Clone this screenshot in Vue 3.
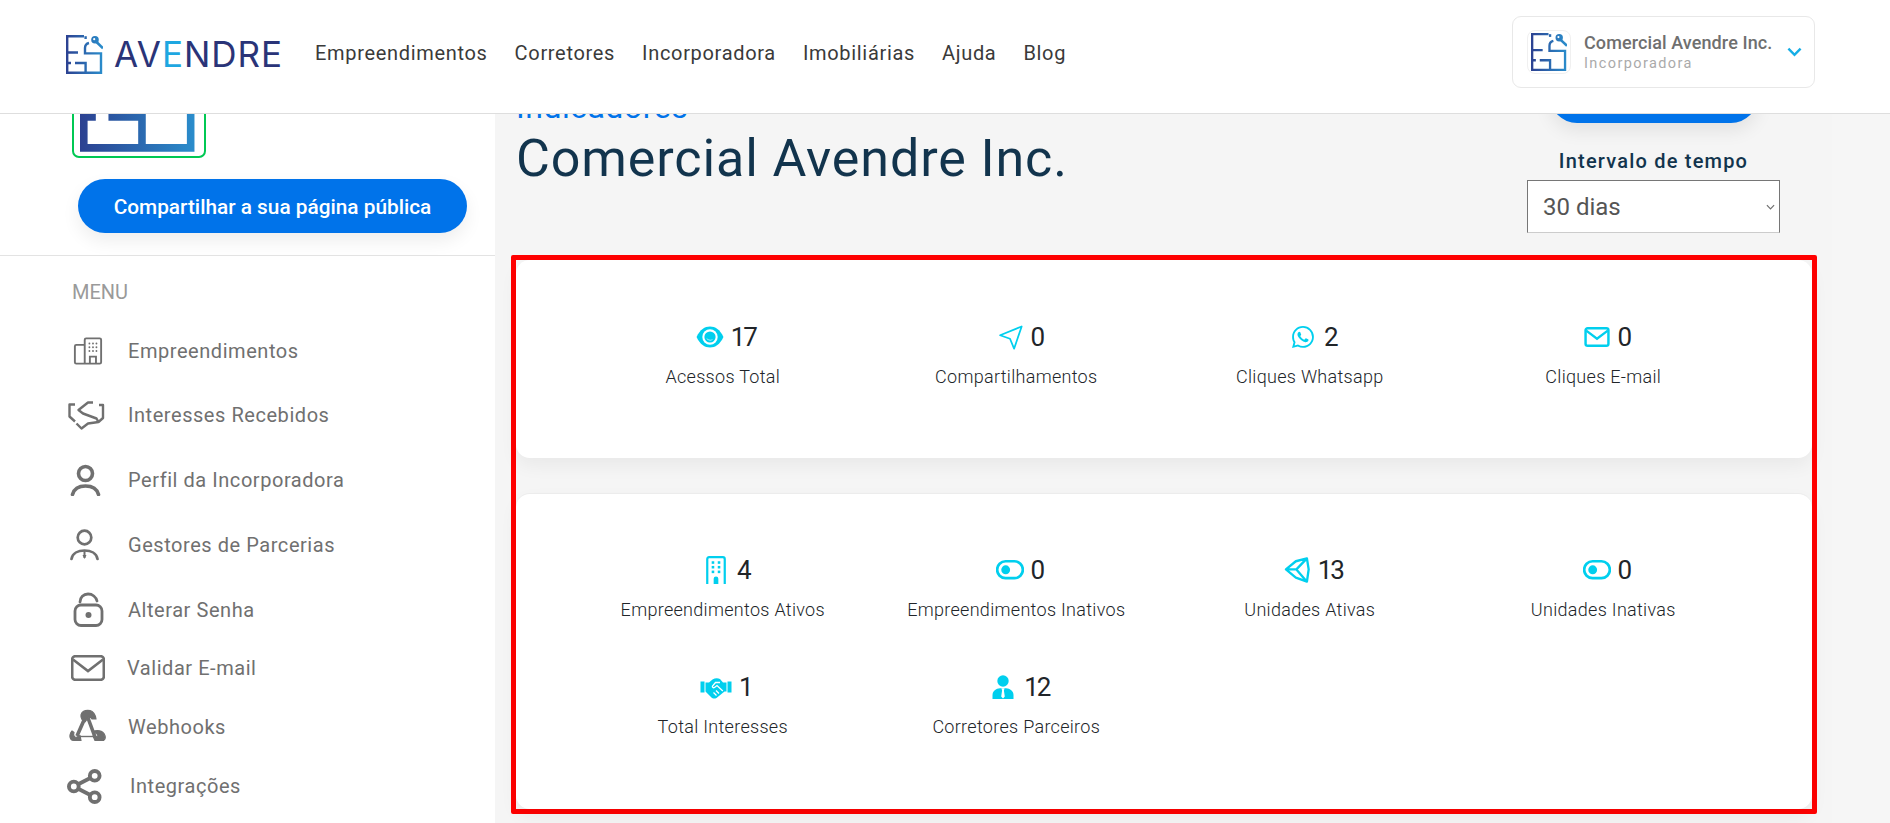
<template>
  <div class="page">
    <!-- icon sprite -->
    <svg class="sprite" aria-hidden="true">
      <defs>
        <linearGradient id="mark-grad" gradientUnits="userSpaceOnUse" x1="0" y1="20" x2="36" y2="20">
          <stop offset="0" stop-color="#2c4191" />
          <stop offset="1" stop-color="#2a8ccb" />
        </linearGradient>
      </defs>
      <symbol id="mark" viewBox="0 0 37 39">
        <g fill="none" stroke="url(#mark-grad)" stroke-width="2.4">
          <path d="M18 1.200H1.200V37.800H35V18.400H19V13C19 10.500 21 8.500 23 8" />
          <path d="M1.200 17.500H12M1.200 28H5M9 28H19.600V37.800" />
          <path d="M19.600 1.200V4" />
          <path d="M30.500 7 37 13.200" stroke-width="2.600" />
        </g>
        <circle cx="29" cy="4.800" r="3.800" fill="url(#mark-grad)" />
        <circle cx="28.200" cy="4.200" r="1.100" fill="#fff" />
      </symbol>

      <!-- stat icons -->
      <symbol id="s-eye" viewBox="0 0 24 24">
        <path fill="currentColor" d="M.5 12C3.500 5.500 7.500 3 12 3S20.500 5.500 23.500 12C20.500 18.500 16.500 21 12 21S3.500 18.500.5 12Z" />
        <circle cx="12" cy="12" r="6.600" fill="#fff" />
        <circle cx="12" cy="12" r="4.800" fill="currentColor" />
        <path d="M8.800 12.600A3.400 3.400 0 0 0 14.800 13.800A5 5 0 0 1 8.800 12.600Z" fill="#9fecf8" />
      </symbol>
      <symbol id="s-send" viewBox="0 0 24 24">
        <path fill="none" stroke="currentColor" stroke-width="1.500" stroke-linejoin="round" d="M3.500 10.500 22 3 15.500 22 12 13.500Z" />
      </symbol>
      <symbol id="s-whats" viewBox="-2.200 -2.200 20.400 20.400">
        <path fill="currentColor" d="M13.601 2.326A7.854 7.854 0 0 0 7.994 0C3.627 0 .068 3.558.064 7.926c0 1.399.366 2.76 1.057 3.965L0 16l4.204-1.102a7.933 7.933 0 0 0 3.79.965h.004c4.368 0 7.926-3.558 7.93-7.93A7.898 7.898 0 0 0 13.6 2.326zM7.994 14.521a6.573 6.573 0 0 1-3.356-.92l-.24-.144-2.494.654.666-2.433-.156-.251a6.56 6.56 0 0 1-1.007-3.505c0-3.626 2.957-6.584 6.591-6.584a6.56 6.56 0 0 1 4.66 1.931 6.557 6.557 0 0 1 1.928 4.66c-.004 3.639-2.961 6.592-6.592 6.592zm3.615-4.934c-.197-.099-1.17-.578-1.353-.646-.182-.065-.315-.099-.445.099-.133.197-.513.646-.627.775-.114.133-.232.148-.43.05-.197-.1-.836-.308-1.592-.985-.59-.525-.985-1.175-1.103-1.372-.114-.198-.011-.304.088-.403.087-.088.197-.232.296-.346.1-.114.133-.198.198-.33.065-.134.034-.248-.015-.347-.05-.099-.445-1.076-.612-1.47-.16-.389-.323-.335-.445-.34-.114-.007-.247-.007-.38-.007a.729.729 0 0 0-.529.247c-.182.198-.691.677-.691 1.654 0 .977.71 1.916.81 2.049.098.133 1.394 2.132 3.383 2.992.47.205.84.326 1.129.418.475.152.904.129 1.246.08.38-.058 1.171-.48 1.338-.943.164-.464.164-.86.114-.943-.049-.084-.182-.133-.38-.232z" />
      </symbol>
      <symbol id="s-mail" viewBox="0 0 24 24">
        <rect x="2.200" y="4.500" width="19.600" height="15" rx="1.800" fill="none" stroke="currentColor" stroke-width="2.100" />
        <path d="M2.800 6.500 12 13.500 21.200 6.500" fill="none" stroke="currentColor" stroke-width="2" />
      </symbol>
      <symbol id="s-building" viewBox="0 0 24 24">
        <path fill="none" stroke="currentColor" stroke-width="1.900" d="M4.500 24V2.800C4.500 1.800 5.100 1 6.100 1H17.900C18.900 1 19.500 1.800 19.500 2.800V24" />
        <g fill="currentColor">
          <rect x="8.300" y="4.500" width="2.200" height="2.200" /><rect x="13.500" y="4.500" width="2.200" height="2.200" />
          <rect x="8.300" y="8.500" width="2.200" height="2.200" /><rect x="13.500" y="8.500" width="2.200" height="2.200" />
          <rect x="8.300" y="12.500" width="2.200" height="2.200" /><rect x="13.500" y="12.500" width="2.200" height="2.200" />
          <path d="M10 24V19.500A2 2 0 0 1 14 19.500V24Z" />
        </g>
      </symbol>
      <symbol id="s-toggle" viewBox="0 0 24 24">
        <rect x="1" y="4.500" width="22" height="14.500" rx="7.200" fill="none" stroke="currentColor" stroke-width="2.300" />
        <circle cx="8.300" cy="11.800" r="3.800" fill="currentColor" />
      </symbol>
      <symbol id="s-unity" viewBox="0 0 24 24">
        <path fill="none" stroke="currentColor" stroke-width="2" stroke-linejoin="round" d="M2.500 11.500 11 4.500 20.500 2 22 11.500 20.500 22 11 18.500ZM2.500 11.500H11.500L20.500 2M11.500 11.500 20.500 22" />
      </symbol>
      <symbol id="s-hands" viewBox="0 0 32 24">
        <g fill="currentColor">
          <rect x=".5" y="6.500" width="4" height="11" />
          <rect x="27.500" y="6.500" width="4" height="11" />
          <path d="M5.500 7.500H9L12.500 4.500C15 2.800 18 2.800 20 4L23 7.500H26.500V16.500H24.500L16.500 23C14.500 24 12.500 23.500 11.500 22.500L5.500 16.500Z" />
        </g>
        <path d="M20 7.500H15.500L12.500 11C12 12 13 13.200 14.500 12.500L17 10.500 22.800 16M19 18.500 16 15.500M16.500 20.500 13.500 17.500" fill="none" stroke="#fff" stroke-width="1.300" />
      </symbol>
      <symbol id="s-tie" viewBox="-2 -2 28 28">
        <circle cx="12" cy="6" r="5.700" fill="currentColor" />
        <path fill="currentColor" d="M1.500 24V20C1.500 16 5 13.500 9 13.300H15C19 13.500 22.500 16 22.500 20V24Z" />
        <path fill="#fff" d="M10.400 13.300H13.600L12.900 15.500 13.800 21.500 12 23.500 10.200 21.500 11.100 15.500Z" />
      </symbol>

      <!-- sidebar icons -->
      <symbol id="m-building" viewBox="0 0 32 32">
        <g fill="none" stroke="currentColor" stroke-width="2">
          <path d="M12.500 9.500H3.500C2.500 9.500 2 10 2 11V28C2 29 2.500 29.500 3.500 29.500H28.500C29.500 29.500 30 29 30 28V4C30 3 29.500 2.500 28.500 2.500H14C13 2.500 12.500 3 12.500 4V29.500" />
          <path d="M18 29.500V22H24.500V29.500" />
        </g>
        <g fill="currentColor">
          <circle cx="17.500" cy="8" r="1" /><circle cx="21.300" cy="8" r="1" /><circle cx="25" cy="8" r="1" />
          <circle cx="17.500" cy="12" r="1" /><circle cx="21.300" cy="12" r="1" /><circle cx="25" cy="12" r="1" />
          <circle cx="17.500" cy="16" r="1" /><circle cx="21.300" cy="16" r="1" /><circle cx="25" cy="16" r="1" />
        </g>
      </symbol>
      <symbol id="m-hands" viewBox="0 0 55 40">
        <path fill="none" stroke="currentColor" stroke-width="2.400" stroke-linejoin="round" d="M15 9.500H9.500V21.500L15 26.500M39 10H43V23L38.500 27M33 7.500H28L18.500 15 23 18.500 36.500 23.500 38.500 27 28 28.500 21.500 33.500 16.500 28.500" />
      </symbol>
      <symbol id="m-user" viewBox="0 0 32 32">
        <circle cx="15.500" cy="9.500" r="7" fill="none" stroke="currentColor" stroke-width="3.600" />
        <path d="M2.500 30.500C4 25 9 22 15.500 22S27 25 28.500 30.500" fill="none" stroke="currentColor" stroke-width="3.600" stroke-linecap="round" />
      </symbol>
      <symbol id="m-manager" viewBox="0 0 32 32">
        <circle cx="14.500" cy="8.500" r="6.800" fill="none" stroke="currentColor" stroke-width="2.700" />
        <path d="M1.500 30C2.500 24.500 8 21.500 14.500 21.500S26.500 24.500 27.500 30" fill="none" stroke="currentColor" stroke-width="2.700" stroke-linecap="round" />
        <path d="M14.500 22V29" fill="none" stroke="currentColor" stroke-width="2" />
        <path d="M12.500 26H16.500L14.500 30Z" fill="currentColor" />
      </symbol>
      <symbol id="m-lock" viewBox="0 0 32 36">
        <rect x="3" y="13" width="27" height="20.500" rx="6" fill="none" stroke="currentColor" stroke-width="2.800" />
        <path d="M8 10C8 5.500 11.500 2 16 2S24 5 25 9" fill="none" stroke="currentColor" stroke-width="2.800" stroke-linecap="round" />
        <circle cx="16.500" cy="23" r="3" fill="currentColor" />
      </symbol>
      <symbol id="m-mail" viewBox="0 0 34 26">
        <rect x="1.200" y="1.200" width="31.600" height="23.600" rx="3" fill="none" stroke="currentColor" stroke-width="2.600" />
        <path d="M2 4.500 17 16 32 4.500" fill="none" stroke="currentColor" stroke-width="2.600" />
      </symbol>
      <symbol id="m-hook" viewBox="0 0 55 40">
        <g fill="currentColor" stroke="currentColor" stroke-width="1.200" stroke-linejoin="round">
          <path d="M21 8C22 4 26 3 30 3.500C33 4 35.500 8 36 12L32 12C31 10 29.500 10 28 11L25 15C22.500 14 20.500 11 21 8Z" />
          <path d="M12 24 14 25.500C13 28 14 30 16 30.500L20 28.500 21 33.500H14C11 33.500 9.500 31 10 28C10.300 26.500 11 25 12 24Z" />
          <path d="M34 24C38 23 42 24 44 26.500C45.500 29 45.500 32 43.500 33.500L35 33.500 33 29 37 29.500C38.500 29 38 27 36 26.500Z" />
        </g>
        <path d="M24.500 12 17 29M28 11 35 30" fill="none" stroke="currentColor" stroke-width="3.600" />
        <path d="M19 29.500H33" fill="none" stroke="currentColor" stroke-width="1.400" />
      </symbol>
      <symbol id="m-share" viewBox="0 0 36 36">
        <g fill="none" stroke="currentColor" stroke-width="4">
          <circle cx="7" cy="18" r="5" /><circle cx="28.500" cy="7" r="5" /><circle cx="28.500" cy="29" r="5" />
          <path d="M11.500 15.700 24 9.300M11.500 20.300 24 26.700" />
        </g>
      </symbol>
    </svg>

    <header class="topbar">
      <div class="brand">
        <svg class="brand-mark"><use href="#mark" /></svg>
        <span class="brand-name">AV<b>E</b>NDRE</span>
      </div>
      <nav class="nav">
        <a v-for="link in links" :key="link">{{ link }}</a>
      </nav>
      <div class="account">
        <span class="account-logo"><svg><use href="#mark" /></svg></span>
        <div class="account-text">
          <strong>Comercial Avendre Inc.</strong>
          <small>Incorporadora</small>
        </div>
        <svg class="chevron" viewBox="0 0 16 10"><path d="M1.500 1.500 8 8 14.500 1.500" fill="none" stroke="currentColor" stroke-width="2.600" /></svg>
      </div>
    </header>

    <div class="body">
      <aside class="sidebar">
        <div class="side-top">
          <div class="company-logo"><svg><use href="#mark" /></svg></div>
          <button class="share-btn">Compartilhar a sua página pública</button>
        </div>
        <div class="menu">
          <p class="menu-title">MENU</p>
          <a v-for="item in menu" :key="item.label" class="menu-item" :style="{ marginBottom: item.gap + 'px' }">
            <span class="menu-icon-box">
              <svg :style="{ width: item.w + 'px', height: item.ih + 'px', marginLeft: item.x + 'px' }"><use :href="'#m-' + item.icon" /></svg>
            </span>
            <span :style="{ marginLeft: 22 + item.tx + 'px' }">{{ item.label }}</span>
          </a>
        </div>
      </aside>

      <main class="main">
        <div class="head">
          <div>
            <p class="eyebrow">Indicadores</p>
            <h1>Comercial Avendre Inc.</h1>
          </div>
          <div class="head-side">
            <button class="head-btn"></button>
            <label for="range">Intervalo de tempo</label>
            <div class="select-wrap">
              <select id="range">
                <option>30 dias</option>
                <option>60 dias</option>
                <option>90 dias</option>
              </select>
              <svg viewBox="0 0 10 6"><path d="M1 1 5 5 9 1" fill="none" stroke="currentColor" stroke-width="1.300" /></svg>
            </div>
          </div>
        </div>

        <section class="highlight">
          <div v-for="(card, i) in cards" :key="i" class="card">
            <div v-for="s in card" :key="s.label" class="stat">
              <div class="stat-num">
                <svg class="stat-icon" :class="{ wide: s.icon === 'hands' }"><use :href="'#s-' + s.icon" /></svg>
                <span>{{ s.value }}</span>
              </div>
              <p>{{ s.label }}</p>
            </div>
          </div>
        </section>
      </main>
    </div>
  </div>
</template>

<script setup>
const links = ['Empreendimentos', 'Corretores', 'Incorporadora', 'Imobiliárias', 'Ajuda', 'Blog']

const menu = [
  { label: 'Empreendimentos', icon: 'building', gap: 6, w: 30, ih: 30, x: 3, tx: 0 },
  { label: 'Interesses Recebidos', icon: 'hands', gap: 7, w: 55, ih: 40, x: -10, tx: 0 },
  { label: 'Perfil da Incorporadora', icon: 'user', gap: 7, w: 32, ih: 32, x: 0, tx: 0 },
  { label: 'Gestores de Parcerias', icon: 'manager', gap: 7, w: 32, ih: 32, x: 0, tx: 0 },
  { label: 'Alterar Senha', icon: 'lock', gap: 0, w: 32, ih: 36, x: 2, tx: 0 },
  { label: 'Validar E-mail', icon: 'mail', gap: 1, w: 34, ih: 26, x: 1, tx: -1 },
  { label: 'Webhooks', icon: 'hook', gap: 1, w: 55, ih: 40, x: -10, tx: 0 },
  { label: 'Integrações', icon: 'share', gap: 0, w: 35, ih: 35, x: -3, tx: 2 }
]

const cards = [
  [
    { icon: 'eye', value: 17, label: 'Acessos Total' },
    { icon: 'send', value: 0, label: 'Compartilhamentos' },
    { icon: 'whats', value: 2, label: 'Cliques Whatsapp' },
    { icon: 'mail', value: 0, label: 'Cliques E-mail' }
  ],
  [
    { icon: 'building', value: 4, label: 'Empreendimentos Ativos' },
    { icon: 'toggle', value: 0, label: 'Empreendimentos Inativos' },
    { icon: 'unity', value: 13, label: 'Unidades Ativas' },
    { icon: 'toggle', value: 0, label: 'Unidades Inativas' },
    { icon: 'hands', value: 1, label: 'Total Interesses' },
    { icon: 'tie', value: 12, label: 'Corretores Parceiros' }
  ]
]
</script>

<style>
html, body { margin: 0; overflow: hidden; background: #fff; }
</style>

<style scoped>
.page {
  width: 1890px;
  height: 823px;
  overflow: hidden;
  font-family: Roboto, "Liberation Sans", sans-serif;
  display: flex;
  flex-direction: column;
}
.sprite { position: absolute; width: 0; height: 0; }

.topbar {
  height: 113px;
  flex: none;
  display: flex;
  align-items: center;
  padding-left: 66px;
  padding-right: 75px;
  border-bottom: 1px solid #dedede;
  background: #fff;
  position: relative;
  z-index: 2;
}
.brand { display: flex; align-items: center; width: 249px; margin-top: -5px; }
.brand-mark { width: 37px; height: 39px; }
.brand-name {
  margin-left: 11px;
  font-family: Inter, sans-serif;
  font-size: 35px;
  letter-spacing: 1px;
  color: #2a3478;
}
.brand-name b { font-weight: 400; color: #1ea7e1; }
.nav { display: flex; gap: 27px; margin-top: -7px; }
.nav a { font-size: 20px; letter-spacing: .68px; color: #3a3a3a; }
.account {
  margin-left: auto;
  width: 303px;
  height: 72px;
  box-sizing: border-box;
  border: 1px solid #e8e8e8;
  border-radius: 9px;
  display: flex;
  align-items: center;
  padding-left: 14px;
  margin-top: -9px;
}
.account-logo {
  width: 42px;
  height: 42px;
  border: 1px solid #f0f0f0;
  border-radius: 8px;
  display: flex;
  align-items: center;
  justify-content: center;
}
.account-logo svg { width: 36px; height: 38px; }
.account-text { margin-left: 13px; display: flex; flex-direction: column; width: 203px; }
.account-text strong { font-size: 18px; font-weight: 500; letter-spacing: .1px; color: #6f6f6f; line-height: 23px; white-space: nowrap; }
.account-text small { font-size: 14.5px; letter-spacing: 1.4px; color: #aaa; line-height: 19px; }
.chevron { width: 15px; height: 10px; color: #15aee6; }

.body { flex: 1; display: flex; min-height: 0; overflow: hidden; }

.sidebar { width: 495px; flex: none; background: #fff; }
.side-top { height: 141px; border-bottom: 1px solid #e3e3e3; display: flow-root; }
.company-logo {
  width: 134px;
  height: 133px;
  margin: -89px 0 0 72px;
  box-sizing: border-box;
  border: 2px solid #00c853;
  border-radius: 7px;
  display: flex;
  align-items: flex-end;
  justify-content: center;
  padding-bottom: 4px;
}
.company-logo svg { width: 117px; height: 124px; flex: none; margin-left: -2px; }
.share-btn {
  display: block;
  width: 389px;
  height: 54px;
  margin: 21px 0 0 78px;
  padding-top: 3px;
  border: 0;
  border-radius: 27px;
  background: #0073ea;
  color: #fff;
  font-family: inherit;
  font-size: 20.800px;
  font-weight: 500;
  box-shadow: 0 8px 18px rgba(0, 0, 0, .07);
}
.menu { padding-left: 70px; }
.menu-title { margin: 25px 0 0 2px; height: 22px; line-height: 22px; font-size: 20px; color: #9a9a9a; }
.menu-item { display: flex; align-items: center; height: 58px; color: #707070; font-size: 20px; letter-spacing: .55px; }
.menu-title + .menu-item { margin-top: 19px; }
.menu-icon-box { width: 36px; flex: none; display: flex; align-items: center; }
.menu-icon-box svg { flex: none; }

.main { flex: 1; background: #f5f5f5; padding-left: 16px; min-width: 0; margin-right: 58px; box-shadow: 58px 0 0 #f6f6f6; }

.head { display: flex; justify-content: space-between; height: 141px; padding-left: 5px; padding-right: 52px; }
.eyebrow {
  margin: -24px 0 5px;
  height: 34px;
  line-height: 34px;
  font-size: 32px;
  letter-spacing: .5px;
  color: #0073ea;
}
h1 {
  margin: 0;
  font-size: 52px;
  line-height: 60px;
  font-weight: 400;
  letter-spacing: .9px;
  color: #12344d;
  white-space: nowrap;
}
.head-side { width: 253px; display: flex; flex-direction: column; align-items: center; }
.head-btn {
  width: 208px;
  height: 54px;
  margin-top: -45px;
  flex: none;
  border: 0;
  border-radius: 27px;
  background: #0073ea;
  box-shadow: 0 8px 18px rgba(0, 0, 0, .08);
}
label { margin-top: 26px; line-height: 24px; font-size: 20px; font-weight: 500; letter-spacing: 1.2px; color: #12344d; }
.select-wrap { position: relative; margin-top: 7px; height: 53px; color: #6f6f6f; }
.select-wrap svg { position: absolute; right: 5px; top: 24px; width: 9px; height: 6px; pointer-events: none; }
select {
  display: block;
  width: 253px;
  height: 53px;
  padding-left: 15px;
  box-sizing: border-box;
  appearance: none;
  border: 1px solid #767676;
  border-bottom-color: #ccc;
  border-radius: 0;
  background: #fff;
  font-family: inherit;
  font-size: 24px;
  color: #555;
}

.highlight {
  width: 1306px;
  height: 559px;
  box-sizing: border-box;
  border: 5px solid #f00;
  border-radius: 2px;
  display: flex;
  flex-direction: column;
  gap: 35px;
}
.card {
  background: #fff;
  border-radius: 14px;
  padding: 62px 61px 60px 60px;
  display: grid;
  grid-template-columns: repeat(4, 293.500px);
  row-gap: 41px;
  box-shadow: 0 8px 18px rgba(0, 0, 0, .05);
}
.card + .card { flex: 1; padding-top: 61px; border-top: 1px solid #ececec; align-content: start; }
.stat { height: 76px; text-align: center; }
.stat-num { display: flex; align-items: center; justify-content: center; gap: 7px; height: 30px; padding-left: 6px; }
.stat-icon { width: 28px; height: 28px; color: #00cfee; flex: none; }
.stat-icon.wide { width: 32px; }
.stat-num span { font-size: 26px; letter-spacing: -2.200px; color: #212529; }
.stat p { margin: 14px 0 0; line-height: 22px; font-size: 18px; font-weight: 300; letter-spacing: .3px; color: #212529; }
</style>
